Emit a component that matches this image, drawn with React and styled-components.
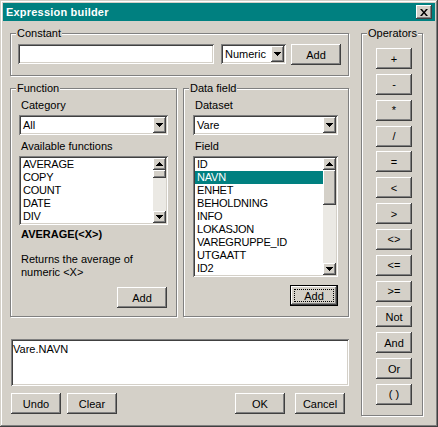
import styled, { createGlobalStyle } from "styled-components";

const GlobalStyle = createGlobalStyle`
  html, body {
    margin: 0;
    padding: 0;
    background: #d4d0c8;
  }
  body {
    font-family: "Liberation Sans", Arial, sans-serif;
    font-size: 11px;
    color: #000;
  }
  * {
    box-sizing: border-box;
  }
`;

const raised = `
  background: #d4d0c8;
  box-shadow: inset -1px -1px #404040, inset 1px 1px #fff,
    inset -2px -2px #808080, inset 2px 2px #d4d0c8;
`;

const sunken = `
  box-shadow: inset 1px 1px #808080, inset -1px -1px #fff,
    inset 2px 2px #404040, inset -2px -2px #d4d0c8;
`;

const functions = ["AVERAGE", "COPY", "COUNT", "DATE", "DIV"];
const fields = [
  "ID",
  "NAVN",
  "ENHET",
  "BEHOLDNING",
  "INFO",
  "LOKASJON",
  "VAREGRUPPE_ID",
  "UTGAATT",
  "ID2",
];
const operators = ["+", "-", "*", "/", "=", "<", ">", "<>", "<=", ">=", "Not", "And", "Or", "( )"];

const Arrow = ({ up }) => (
  <svg width="7" height="4" viewBox="0 0 7 4">
    <path
      fill="#000"
      d={
        up
          ? "M3 0h1v1H3zM2 1h3v1H2zM1 2h5v1H1zM0 3h7v1H0z"
          : "M0 0h7v1H0zM1 1h5v1H1zM2 2h3v1H2zM3 3h1v1H3z"
      }
    />
  </svg>
);

const App = () => {
  return (
    <>
      <GlobalStyle />
      <Window>
        <TitleBar>
          <Title>Expression builder</Title>
          <CloseButton>
            <svg width="8" height="7" viewBox="0 0 8 7">
              <path fill="#000" d="M0 0h2l2 2.4L6 0h2L5 3.5 8 7H6L4 4.6 2 7H0l3-3.5z" />
            </svg>
          </CloseButton>
        </TitleBar>
        <Body>
          <LeftColumn>
            <Group>
              <Legend>Constant</Legend>
              <ConstantRow>
                <TextInput />
                <Select $w={65}>
                  <SelectText>Numeric</SelectText>
                  <DropButton>
                    <Arrow />
                  </DropButton>
                </Select>
                <Button>Add</Button>
              </ConstantRow>
            </Group>

            <PanelRow>
              <Group $w={167}>
                <Legend>Function</Legend>
                <PanelBody $pl={8} $pr={8}>
                  <Label>Category</Label>
                  <Select $w={149} $mt={3}>
                    <SelectText>All</SelectText>
                    <DropButton>
                      <Arrow />
                    </DropButton>
                  </Select>
                  <Label $mt={5}>Available functions</Label>
                  <ListBox $h={69}>
                    <Items>
                      {functions.map((f) => (
                        <Item key={f}>{f}</Item>
                      ))}
                    </Items>
                    <ScrollBar>
                      <ScrollButton>
                        <Arrow up />
                      </ScrollButton>
                      <Thumb $h={8} />
                      <Track />
                      <ScrollButton>
                        <Arrow />
                      </ScrollButton>
                    </ScrollBar>
                  </ListBox>
                  <Signature>AVERAGE(&lt;X&gt;)</Signature>
                  <Description>
                    Returns the average of
                    <br />
                    numeric &lt;X&gt;
                  </Description>
                  <PanelButton $mt={8} $mr={1}>
                    Add
                  </PanelButton>
                </PanelBody>
              </Group>

              <Group $w={166}>
                <Legend>Data field</Legend>
                <PanelBody $pl={9} $pr={10}>
                  <Label>Dataset</Label>
                  <Select $w={145} $mt={3}>
                    <SelectText>Vare</SelectText>
                    <DropButton>
                      <Arrow />
                    </DropButton>
                  </Select>
                  <Label $mt={5}>Field</Label>
                  <ListBox $h={121}>
                    <Items>
                      {fields.map((f) => (
                        <Item key={f} $selected={f === "NAVN"}>
                          {f}
                        </Item>
                      ))}
                    </Items>
                    <ScrollBar>
                      <ScrollButton>
                        <Arrow up />
                      </ScrollButton>
                      <Thumb $h={35} />
                      <Track />
                      <ScrollButton>
                        <Arrow />
                      </ScrollButton>
                    </ScrollBar>
                  </ListBox>
                  <PanelButton $mt={8} $mr={0} $w={48} $default>
                    Add
                  </PanelButton>
                </PanelBody>
              </Group>
            </PanelRow>

            <Memo>Vare.NAVN</Memo>

            <BottomRow>
              <ButtonGroup $gap={6}>
                <Button>Undo</Button>
                <Button>Clear</Button>
              </ButtonGroup>
              <ButtonGroup $gap={10}>
                <Button>OK</Button>
                <Button>Cancel</Button>
              </ButtonGroup>
            </BottomRow>
          </LeftColumn>

          <Group>
            <Legend>Operators</Legend>
            <OperatorList>
              {operators.map((op) => (
                <Button key={op} $w={36}>
                  {op}
                </Button>
              ))}
            </OperatorList>
          </Group>
        </Body>
      </Window>
    </>
  );
};

const Window = styled.div`
  width: 438px;
  height: 427px;
  padding: 3px;
  background: #d4d0c8;
  box-shadow: inset -1px -1px #404040, inset 1px 1px #d4d0c8,
    inset -2px -2px #808080, inset 2px 2px #fff;
  display: flex;
  flex-direction: column;
`;

const TitleBar = styled.div`
  height: 18px;
  background: #008080;
  display: flex;
  align-items: center;
  justify-content: space-between;
  padding: 0 3px 0 3px;
`;

const Title = styled.div`
  color: #fff;
  font-weight: bold;
  font-size: 11px;
  letter-spacing: 0.2px;
`;

const CloseButton = styled.div`
  width: 16px;
  height: 14px;
  ${raised}
  display: flex;
  align-items: center;
  justify-content: center;
`;

const Body = styled.div`
  flex: 1;
  display: grid;
  grid-template-columns: 339px 62px;
  column-gap: 12px;
  align-items: start;
  padding: 6px 0 0 7px;
`;

const LeftColumn = styled.div`
  display: flex;
  flex-direction: column;
`;

const Group = styled.fieldset`
  margin: 0;
  padding: 0;
  min-width: 0;
  width: ${(p) => (p.$w ? `${p.$w}px` : "auto")};
  border: 1px solid #808080;
  box-shadow: 1px 1px #fff, inset 1px 1px #fff;
`;

const Legend = styled.legend`
  margin-left: 5px;
  padding: 0 1px;
  line-height: 13px;
  background: #d4d0c8;
`;

const ConstantRow = styled.div`
  display: flex;
  align-items: flex-start;
  padding: 4px 0 10px 7px;
`;

const TextInput = styled.div`
  width: 196px;
  height: 20px;
  background: #fff;
  margin-right: 7px;
  ${sunken}
`;

const Select = styled.div`
  width: ${(p) => p.$w}px;
  height: 20px;
  margin-top: ${(p) => p.$mt || 0}px;
  margin-right: 5px;
  padding: 2px;
  background: #fff;
  display: flex;
  ${sunken}
`;

const SelectText = styled.div`
  flex: 1;
  padding-left: 2px;
  line-height: 16px;
  white-space: nowrap;
  overflow: hidden;
`;

const DropButton = styled.div`
  width: 13px;
  ${raised}
  display: flex;
  align-items: center;
  justify-content: center;
`;

const Button = styled.button`
  width: ${(p) => p.$w || 50}px;
  height: 21px;
  padding: 0;
  font: inherit;
  color: #000;
  border: ${(p) => (p.$default ? "1px solid #000" : "none")};
  ${raised}
  ${(p) => p.$default && "outline: 1px dotted #000; outline-offset: -5px;"}
`;

const PanelButton = styled(Button)`
  align-self: flex-end;
  margin-top: ${(p) => p.$mt}px;
  margin-right: ${(p) => p.$mr}px;
`;

const PanelRow = styled.div`
  display: flex;
  gap: 6px;
  margin-top: 6px;
`;

const PanelBody = styled.div`
  display: flex;
  flex-direction: column;
  padding: 4px ${(p) => p.$pr}px 8px ${(p) => p.$pl}px;
`;

const Label = styled.div`
  line-height: 13px;
  margin-left: 2px;
  margin-top: ${(p) => p.$mt || 0}px;
`;

const ListBox = styled.div`
  height: ${(p) => p.$h}px;
  margin-top: 3px;
  padding: 2px;
  background: #fff;
  display: flex;
  ${sunken}
`;

const Items = styled.div`
  flex: 1;
  overflow: hidden;
`;

const Item = styled.div`
  height: 13px;
  line-height: 13px;
  padding-left: 2px;
  white-space: nowrap;
  letter-spacing: -0.2px;
  background: ${(p) => (p.$selected ? "#008080" : "transparent")};
  color: ${(p) => (p.$selected ? "#fff" : "#000")};
`;

const ScrollBar = styled.div`
  width: 13px;
  display: flex;
  flex-direction: column;
  background: #ebe9e4;
`;

const ScrollButton = styled.div`
  height: 12px;
  ${raised}
  display: flex;
  align-items: center;
  justify-content: center;
`;

const Thumb = styled.div`
  height: ${(p) => p.$h}px;
  ${raised}
`;

const Track = styled.div`
  flex: 1;
`;

const Signature = styled.div`
  font-weight: bold;
  line-height: 13px;
  margin: 3px 0 0 2px;
`;

const Description = styled.div`
  line-height: 13px;
  margin: 12px 0 0 2px;
`;

const Memo = styled.div`
  width: 338px;
  height: 47px;
  margin: 22px 0 0 1px;
  padding: 4px 2px;
  line-height: 13px;
  background: #fff;
  ${sunken}
`;

const BottomRow = styled.div`
  display: flex;
  justify-content: space-between;
  margin-top: 7px;
  padding: 0 4px 0 1px;
`;

const ButtonGroup = styled.div`
  display: flex;
  gap: ${(p) => p.$gap}px;
`;

const OperatorList = styled.div`
  height: 357px;
  display: flex;
  flex-direction: column;
  justify-content: space-between;
  padding-left: 14px;
  margin: 8px 0 10px;
`;

export default App;
